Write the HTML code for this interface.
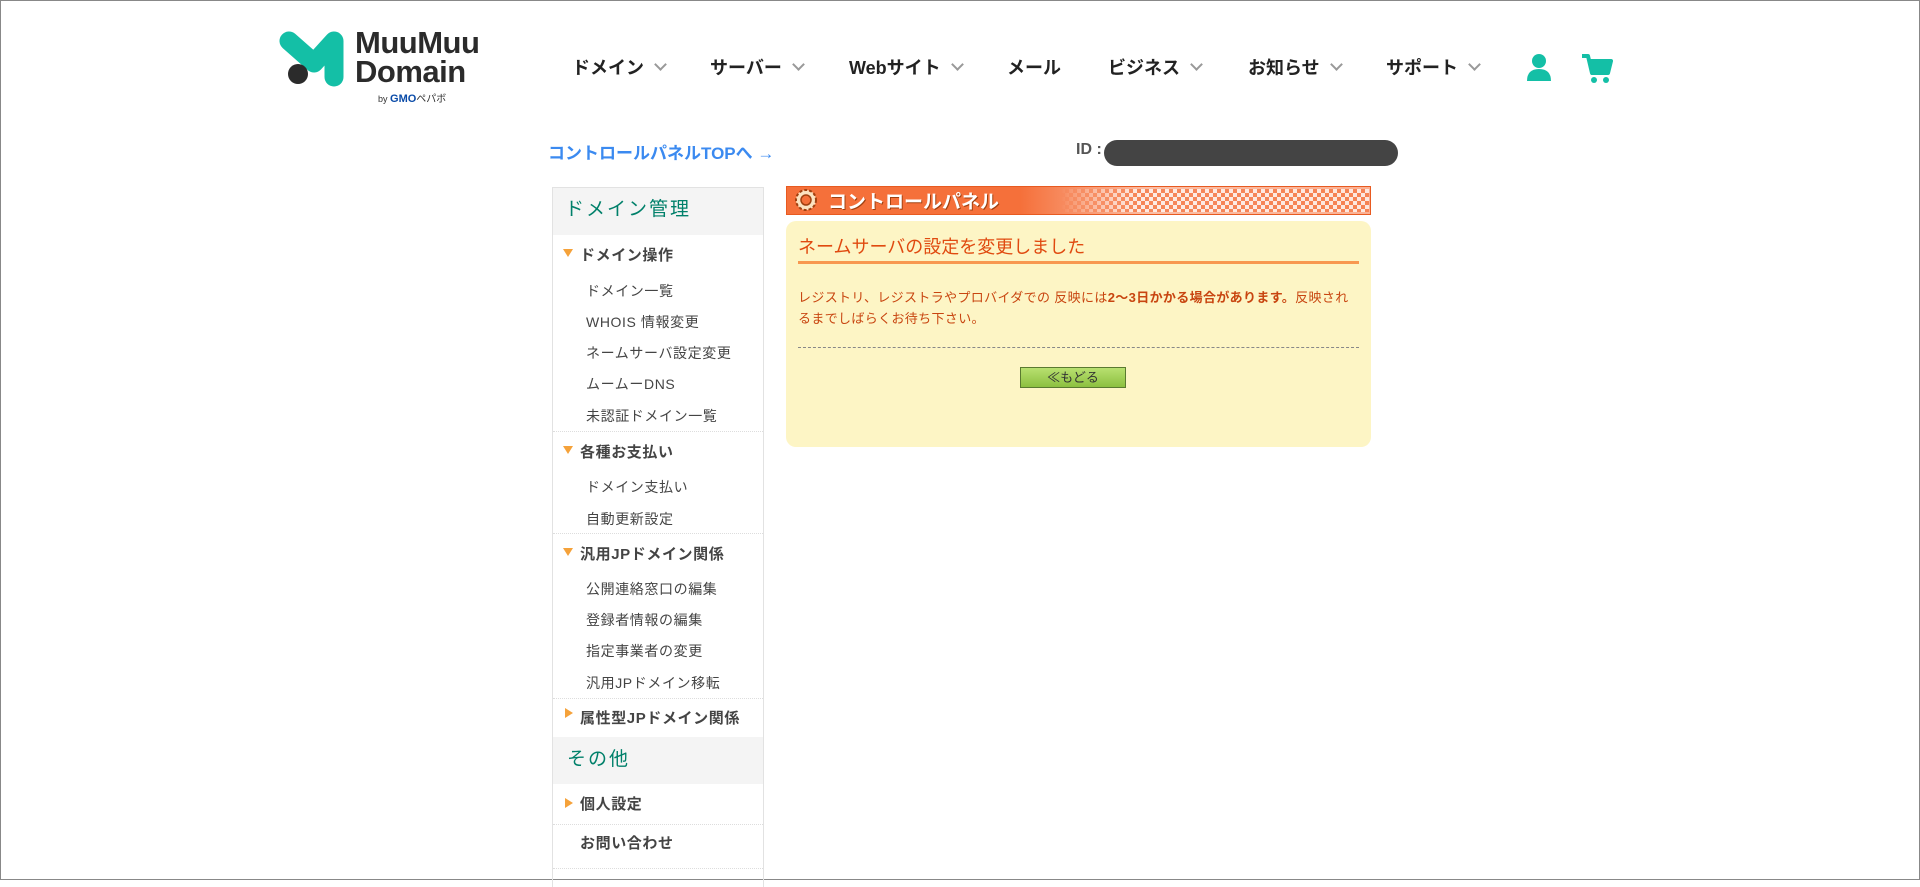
<!DOCTYPE html>
<html><head><meta charset="utf-8"><style>
*{margin:0;padding:0;box-sizing:border-box}
body{width:1920px;height:880px;background:#fff;position:relative;overflow:hidden;font-family:"Liberation Sans","Noto Sans CJK JP",sans-serif;border:1px solid #888}
.a{position:absolute;white-space:nowrap}
.nav{font-weight:bold;font-size:18px;color:#222;top:53px}
.chev{display:inline-block;width:9px;height:9px;border-right:2px solid #999;border-bottom:2px solid #999;transform:rotate(45deg);margin-left:12px;position:relative;top:-5px}
.side{position:absolute;left:551px;top:186px;width:212px;height:700px;border:1px solid #e2e2e2;border-bottom:none}
.hd{position:absolute;left:0;width:210px;background:#f4f4f4;color:#00806a;font-size:19px;padding-left:12px;letter-spacing:2px}
.b{position:absolute;left:27px;font-weight:bold;font-size:15px;color:#444;letter-spacing:0.6px}
.s{position:absolute;left:33px;font-size:14px;color:#444;letter-spacing:0.6px}
.t{position:absolute;left:10px;width:0;height:0;border-left:5px solid transparent;border-right:5px solid transparent;border-top:8px solid #f5a23a}
.r{position:absolute;left:12px;width:0;height:0;border-top:5px solid transparent;border-bottom:5px solid transparent;border-left:8px solid #f5a23a}
.sep{position:absolute;left:0;width:210px;border-top:1px dotted #ddd}
</style></head><body>
<svg class="a" style="left:278px;top:28px" width="70" height="60" viewBox="0 0 70 60">
<path d="M10 12 L35 34 L55 12 L55 48" fill="none" stroke="#14bfa6" stroke-width="19" stroke-linecap="round" stroke-linejoin="round"/>
<circle cx="19" cy="45" r="10" fill="#2b2b2b"/></svg>
<div class="a" style="left:354px;top:27px;font-size:31px;font-weight:bold;color:#2b2b2b;line-height:29px;letter-spacing:-0.5px">MuuMuu<br>Domain</div>
<div class="a" style="left:377px;top:89px;font-size:9px;color:#333">by <b style="color:#0a4ba8;font-size:11px">GMO</b><span style="color:#333;font-size:10px">ペパボ</span></div>

<div class="a nav" style="left:571px">ドメイン<span class="chev"></span></div>
<div class="a nav" style="left:709px">サーバー<span class="chev"></span></div>
<div class="a nav" style="left:848px">Webサイト<span class="chev"></span></div>
<div class="a nav" style="left:1006px">メール</div>
<div class="a nav" style="left:1107px">ビジネス<span class="chev"></span></div>
<div class="a nav" style="left:1247px">お知らせ<span class="chev"></span></div>
<div class="a nav" style="left:1385px">サポート<span class="chev"></span></div>
<svg class="a" style="left:1524px;top:52px" width="28" height="28" viewBox="0 0 28 28"><circle cx="14" cy="8" r="7" fill="#14bfa6"/><path d="M2 28 Q2 16 14 16 Q26 16 26 28Z" fill="#14bfa6"/></svg>
<svg class="a" style="left:1580px;top:52px" width="32" height="32" viewBox="0 0 32 32"><path d="M1 3 H7 L11 20 H27 L30 8 H9" fill="none" stroke="#14bfa6" stroke-width="4" stroke-linejoin="round"/><rect x="10" y="9" width="19" height="10" fill="#14bfa6"/><circle cx="13" cy="27" r="3" fill="#14bfa6"/><circle cx="25" cy="27" r="3" fill="#14bfa6"/></svg>

<div class="a" style="left:547px;top:138px;font-size:17px;font-weight:bold;color:#3b8af0">コントロールパネルTOPへ →</div>
<div class="a" style="left:1075px;top:140px;font-size:16px;font-weight:bold;color:#555">ID :</div>
<div class="a" style="left:1103px;top:139px;width:294px;height:26px;background:#444;border-radius:13px"></div>

<div class="side">
<div class="hd" style="top:0;height:47px;line-height:44px">ドメイン管理</div>
<div class="t" style="top:61px"></div><div class="b" style="top:56px">ドメイン操作</div>
<div class="s" style="top:93px">ドメイン一覧</div>
<div class="s" style="top:124px">WHOIS 情報変更</div>
<div class="s" style="top:155px">ネームサーバ設定変更</div>
<div class="s" style="top:186px">ムームーDNS</div>
<div class="s" style="top:218px">未認証ドメイン一覧</div>
<div class="sep" style="top:243px"></div>
<div class="t" style="top:258px"></div><div class="b" style="top:253px">各種お支払い</div>
<div class="s" style="top:289px">ドメイン支払い</div>
<div class="s" style="top:321px">自動更新設定</div>
<div class="sep" style="top:345px"></div>
<div class="t" style="top:360px"></div><div class="b" style="top:355px">汎用JPドメイン関係</div>
<div class="s" style="top:391px">公開連絡窓口の編集</div>
<div class="s" style="top:422px">登録者情報の編集</div>
<div class="s" style="top:453px">指定事業者の変更</div>
<div class="s" style="top:485px">汎用JPドメイン移転</div>
<div class="sep" style="top:510px"></div>
<div class="r" style="top:520px"></div><div class="b" style="top:519px">属性型JPドメイン関係</div>
<div class="hd" style="top:549px;height:47px;line-height:46px;padding-left:14px">その他</div>
<div class="r" style="top:610px"></div><div class="b" style="top:605px">個人設定</div>
<div class="sep" style="top:636px"></div>
<div class="b" style="top:644px">お問い合わせ</div>
<div class="sep" style="top:680px"></div>
</div>

<div class="a" style="left:785px;top:185px;width:585px;height:29px;border:1px solid #e85a20;background:linear-gradient(90deg,#f5703a 0,#f5703a 40%,rgba(245,112,58,0.45) 62%,rgba(245,112,58,0.55) 100%);"></div>
<div class="a" style="left:1060px;top:188px;width:308px;height:23px;background-image:repeating-conic-gradient(#f5703a 0 25%,#fff 0 50%);background-size:8px 8px;opacity:.7;-webkit-mask-image:linear-gradient(90deg,transparent 0,#000 25%)"></div>
<svg class="a" style="left:792px;top:186px" width="26" height="26" viewBox="0 0 26 26"><circle cx="13" cy="13" r="10" fill="#fbe2c0" stroke="#a04010" stroke-width="2" stroke-dasharray="3 2"/><circle cx="13" cy="13" r="5" fill="#f5703a" stroke="#a04010" stroke-width="1.5"/></svg>
<div class="a" style="left:827px;top:186px;font-size:19px;font-weight:bold;color:#fff;text-shadow:1px 1px 0 #a04010">コントロールパネル</div>

<div class="a" style="left:785px;top:220px;width:585px;height:226px;background:#fdf5c5;border-radius:10px"></div>
<div class="a" style="left:797px;top:232px;font-size:18px;color:#e04a10">ネームサーバの設定を変更しました</div>
<div class="a" style="left:797px;top:260px;width:561px;height:3px;background:#f89850"></div>
<div class="a" style="left:797px;top:286px;width:555px;white-space:normal;font-size:13px;line-height:21px;color:#c84510;letter-spacing:0.35px">レジストリ、レジストラやプロバイダでの 反映には<b>2〜3日かかる場合があります。</b>反映されるまでしばらくお待ち下さい。</div>
<div class="a" style="left:797px;top:346px;width:561px;border-top:1px dashed #888"></div>
<div class="a" style="left:1019px;top:366px;width:106px;height:21px;background:linear-gradient(#b8e070,#8cc040);border:1px solid #5a7a30;font-size:13px;color:#333;text-align:center;line-height:19px">≪もどる</div>
</body></html>
